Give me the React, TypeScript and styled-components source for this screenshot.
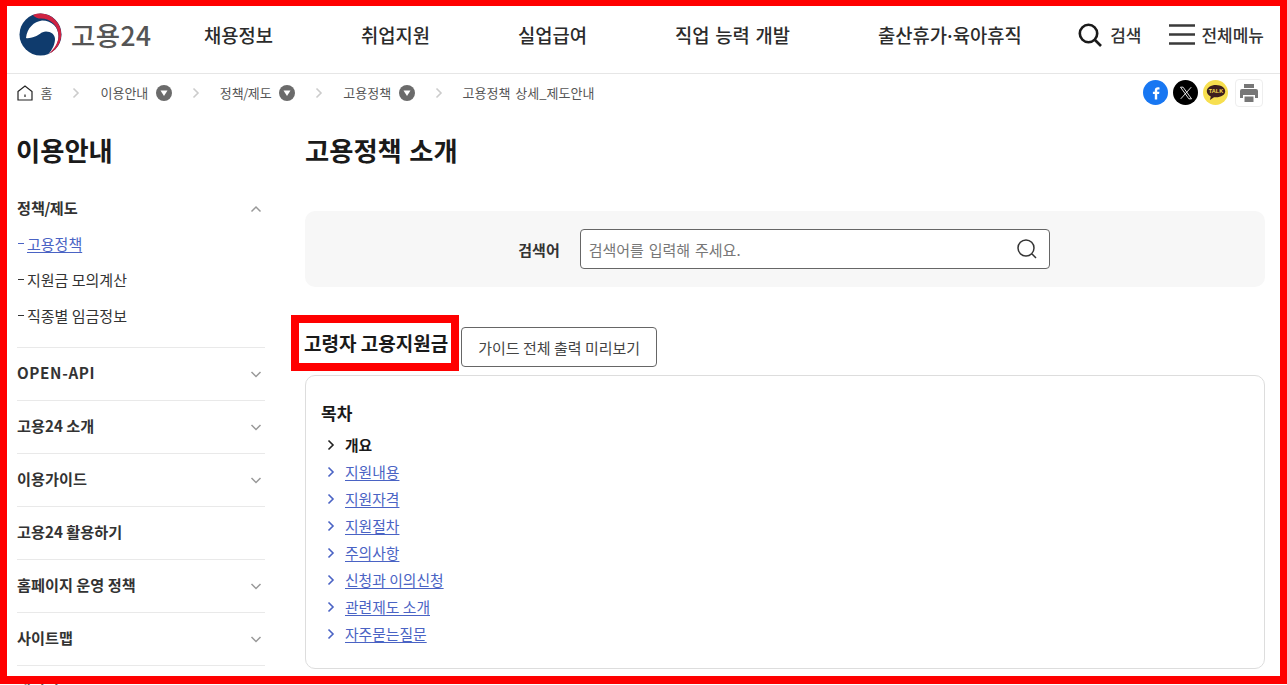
import React from "react";
import styled, { createGlobalStyle } from "styled-components";

const GlobalStyle = createGlobalStyle`
  html, body {
    margin: 0;
    padding: 0;
    height: 685px;
    overflow: hidden;
    background: #fff;
    font-family: "Noto Sans CJK KR", "Noto Sans", sans-serif;
    color: #222;
  }
  * { box-sizing: border-box; }
  a { color: inherit; text-decoration: none; }
  ul { list-style: none; margin: 0; padding: 0; }
`;

const Page = styled.div`
  width: 1287px;
  height: 685px;
  overflow: hidden;
  position: relative;
`;

const RedFrame = styled.div`
  position: absolute;
  inset: 0 0 1px 0;
  border: solid #f00;
  border-width: 6px 7px 8px 7px;
  pointer-events: none;
  z-index: 5;
`;

const Header = styled.header`
  height: 74px;
  border-bottom: 1px solid #e6e6e6;
  display: flex;
  align-items: center;
  padding: 0 23px 4px 19px;
`;

const Logo = styled.a`
  display: flex;
  align-items: center;
  gap: 9px;
  width: 185px;
  font-size: 26.4px;
  font-weight: 500;
  color: #555;
  letter-spacing: 0.5px;
`;

const Nav = styled.nav`
  display: flex;
  gap: 88px;
  flex: 1;
`;

const NavItem = styled.a`
  font-size: 18.75px;
  font-weight: 500;
  word-spacing: 1.5px;
  color: #2b2b2b;
  white-space: nowrap;
`;

const NarrowDot = styled.span`
  margin: 0 -2.5px;
`;

const HeaderTools = styled.div`
  display: flex;
  align-items: center;
  gap: 28px;
`;

const Tool = styled.a`
  display: flex;
  align-items: center;
  gap: 6px;
  font-size: 17px;
  font-weight: 500;
  color: #333;
`;

const CrumbBar = styled.div`
  height: 37px;
  display: flex;
  align-items: center;
  justify-content: space-between;
  padding: 0 24px 0 17px;
`;

const Crumbs = styled.ol`
  display: flex;
  align-items: center;
  margin: 0;
  padding: 0;
  list-style: none;
  font-size: 13px;
  word-spacing: 2px;
  color: #555;
`;

const Crumb = styled.li`
  display: flex;
  align-items: center;
  gap: 7.5px;
  white-space: nowrap;
`;

const CrumbSep = styled.span`
  display: flex;
  width: 48px;
  justify-content: center;
`;

const CrumbDot = styled.span`
  width: 16px;
  height: 16px;
  border-radius: 50%;
  background: #6b6b6b;
  display: flex;
  align-items: center;
  justify-content: center;
`;

const Share = styled.div`
  display: flex;
  align-items: center;
  gap: 5px;
`;

const ShareCircle = styled.a<{ $bg: string }>`
  width: 25px;
  height: 25px;
  border-radius: 50%;
  background: ${(p) => p.$bg};
  display: flex;
  align-items: center;
  justify-content: center;
`;

const PrintButton = styled.a`
  width: 28px;
  height: 28px;
  margin-left: 2px;
  border: 1px solid #eee;
  border-radius: 4px;
  display: flex;
  align-items: center;
  justify-content: center;
`;

const Body = styled.div`
  display: flex;
  padding: 0 22px 0 17px;
  gap: 40px;
`;

const Side = styled.aside`
  width: 248px;
  flex: none;
`;

const SideTitle = styled.h2`
  margin: 17px 0 11px -1px;
  font-size: 26.3px;
  line-height: 44px;
  font-weight: 700;
  color: #1a1a1a;
`;

const SideGroup = styled.div`
  border-bottom: 1px solid #e9e9e9;
`;

const SideHead = styled.a`
  display: flex;
  align-items: center;
  justify-content: space-between;
  height: 52px;
  padding: 0 2px 5px 0;
  font-size: 15.2px;
  font-weight: 700;
  color: #333;
  svg { margin-bottom: -5px; }
`;

const LatinLabel = styled.span`
  letter-spacing: 0.65px;
`;

const Slash = styled.span`
  margin: 0 -0.5px;
`;

const CrumbSlash = styled.span`
  margin: 0 -0.5px;
`;

const SubList = styled.ul`
  margin-top: -10px;
  padding-bottom: 14px;
`;

const SubItem = styled.li<{ $active?: boolean }>`
  height: 36px;
  display: flex;
  align-items: center;
  font-size: 15px;
  color: ${(p) => (p.$active ? "#4a63c4" : "#333")};
  a { text-decoration: ${(p) => (p.$active ? "underline" : "none")}; text-underline-offset: 2px; }
  &::before {
    content: "";
    width: 6px;
    height: 1px;
    margin: 0 3px 0 1px;
    background: currentColor;
  }
`;

const Main = styled.main`
  flex: 1;
  min-width: 0;
`;

const PageTitle = styled.h1`
  margin: 17px 0 0;
  font-size: 26.3px;
  word-spacing: 1.5px;
  line-height: 44px;
  font-weight: 700;
  color: #1a1a1a;
`;

const SearchPanel = styled.form`
  margin-top: 39px;
  height: 76px;
  padding-right: 2px;
  background: #f7f7f7;
  border-radius: 10px;
  display: flex;
  align-items: center;
  justify-content: center;
  gap: 20px;
`;

const SearchLabel = styled.label`
  font-size: 15px;
  font-weight: 700;
  color: #333;
`;

const SearchField = styled.div`
  width: 470px;
  height: 40px;
  border: 1px solid #666;
  border-radius: 4px;
  background: #fff;
  display: flex;
  align-items: center;
  justify-content: space-between;
  padding: 0 11px 0 8px;
`;

const SearchInput = styled.input`
  border: 0;
  outline: 0;
  flex: 1;
  font: inherit;
  font-size: 15px;
  word-spacing: 1.5px;
  background: transparent;
  padding: 0;
  &::placeholder { color: #777; opacity: 1; }
`;

const TitleRow = styled.div`
  margin-top: 40px;
  height: 40px;
  display: flex;
  align-items: center;
  gap: 13px;
`;

const GuideTitle = styled.h3`
  position: relative;
  margin: 0 0 8px -1px;
  font-size: 19px;
  line-height: 28px;
  font-weight: 700;
  color: #1a1a1a;
  white-space: nowrap;
  &::after {
    content: "";
    position: absolute;
    inset: -14px -11px -14px -13px;
    border: 8px solid #f00;
  }
`;

const PreviewButton = styled.button`
  height: 40px;
  width: 196px;
  border: 1px solid #666;
  border-radius: 4px;
  background: #fff;
  font: inherit;
  font-size: 15px;
  color: #444;
  padding: 0;
`;

const Toc = styled.section`
  margin-top: 8px;
  height: 294px;
  border: 1px solid #ddd;
  border-radius: 10px;
  padding: 23px 15px 0;
`;

const TocTitle = styled.h4`
  margin: 0 0 5px;
  font-size: 17px;
  line-height: 27px;
  font-weight: 700;
  color: #1a1a1a;
`;

const TocItem = styled.li<{ $current?: boolean }>`
  height: 27px;
  display: flex;
  align-items: center;
  gap: 8px;
  padding-left: 4px;
  font-size: 14.8px;
  color: ${(p) => (p.$current ? "#1a1a1a" : "#4a63c4")};
  font-weight: ${(p) => (p.$current ? 700 : 400)};
  a { text-decoration: ${(p) => (p.$current ? "none" : "underline")}; text-underline-offset: 2px; }
`;

const Chevron = ({ up, color = "#999", size = 14 }: { up?: boolean; color?: string; size?: number }) => (
  <svg width={size} height={size} viewBox="0 0 14 14" fill="none">
    <path d={up ? "M2.5 9.5 7 5l4.5 4.5" : "M2.5 5 7 9.5 11.5 5"} stroke={color} strokeWidth="1.5" />
  </svg>
);

const ChevronRight = ({ color, size = 12 }: { color: string; size?: number }) => (
  <svg width={size} height={size} viewBox="0 0 12 12" fill="none">
    <path d="M3.5 1.5 8 6l-4.5 4.5" stroke={color} strokeWidth="1.6" />
  </svg>
);

const Emblem = () => (
  <svg width="43" height="43" viewBox="0 0 43 43">
    <circle cx="21.5" cy="21.5" r="21" fill="#0f3b6d" />
    <path d="M7 25C8 15 15 8.500 23 7.500c10 0 16.500 7 16.500 15.500 0 8-4.500 15-10.500 18.500 5-5.500 7-11 7-15.500 0-4.500-4-7.500-9-7.500-5 0-7 4-11 5C12 25 9 25.500 7 25Z" fill="#fff" />
    <path d="M14 1.900A21 21 0 0 1 30 40.700c6-5.700 9.500-11.700 9.500-17.700C39.500 13 32 5.500 22 5.500c-3 0-6-1-8-3.600Z" fill="#cf2342" />
  </svg>
);

const sideGroups = ["고용24 소개", "이용가이드", "고용24 활용하기", "홈페이지 운영 정책", "사이트맵"];
const tocLinks = ["지원내용", "지원자격", "지원절차", "주의사항", "신청과 이의신청", "관련제도 소개", "자주묻는질문"];
const crumbTrail = [
  <>이용안내</>,
  <>정책<CrumbSlash>/</CrumbSlash>제도</>,
  <>고용정책</>,
];

export default function App() {
  return (
    <Page>
      <GlobalStyle />
      <Header>
        <Logo href="#">
          <Emblem />
          <span>고용24</span>
        </Logo>
        <Nav>
          <NavItem href="#">채용정보</NavItem>
          <NavItem href="#">취업지원</NavItem>
          <NavItem href="#">실업급여</NavItem>
          <NavItem href="#">직업 능력 개발</NavItem>
          <NavItem href="#">출산휴가<NarrowDot>·</NarrowDot>육아휴직</NavItem>
        </Nav>
        <HeaderTools>
          <Tool href="#">
            <svg width="26" height="24" viewBox="0 0 26 24" fill="none" stroke="#1a1a1a" strokeWidth="2.6">
              <circle cx="10.5" cy="10.5" r="8.7" />
              <path d="m17 17 6 6" />
            </svg>
            검색
          </Tool>
          <Tool href="#">
            <svg width="26" height="21" viewBox="0 0 26 21" fill="none" stroke="#3a3a3a" strokeWidth="2.5">
              <path d="M0 1.500h26M0 10.500h26M0 19.500h26" />
            </svg>
            전체메뉴
          </Tool>
        </HeaderTools>
      </Header>

      <CrumbBar>
        <Crumbs>
          <Crumb>
            <svg width="16" height="16" viewBox="0 0 16 16" fill="none" stroke="#222" strokeWidth="1.2">
              <path d="M1 6.500 8 1l7 5.500V15H1Z" />
              <path d="M8 9.500v2.500" />
            </svg>
            홈
          </Crumb>
          <CrumbSep><ChevronRight color="#ccc" /></CrumbSep>
          {crumbTrail.map((c, i) => (
            <React.Fragment key={i}>
              <Crumb>
                <span>{c}</span>
                <CrumbDot>
                  <svg width="8" height="8" viewBox="0 0 8 8"><path d="M0.5 1.500h7L4 7Z" fill="#fff" /></svg>
                </CrumbDot>
              </Crumb>
              <CrumbSep><ChevronRight color="#ccc" /></CrumbSep>
            </React.Fragment>
          ))}
          <Crumb>고용정책 상세_제도안내</Crumb>
        </Crumbs>
        <Share>
          <ShareCircle href="#" $bg="#1877f2">
            <svg width="14" height="14" viewBox="0 0 14 14"><path d="M8.2 13.500V8h1.900l.3-2.200H8.200V4.500c0-.7.3-1.100 1.100-1.100h1.200V1.500C10.200 1.400 9.600 1.300 8.900 1.300 7 1.300 5.800 2.400 5.800 4.300v1.500H3.900V8h1.900v5.500Z" fill="#fff" /></svg>
          </ShareCircle>
          <ShareCircle href="#" $bg="#000">
            <svg width="14" height="14" viewBox="0 0 24 24" fill="none" stroke="#fff" strokeWidth="1.5"><path d="M2.500 2h4.500l14.500 20H17ZM21 2 3 22" /></svg>
          </ShareCircle>
          <ShareCircle href="#" $bg="#f7df4f">
            <svg width="20" height="18" viewBox="0 0 20 18">
              <path d="M10 1C4.800 1 .8 3.700.8 7.200c0 2.200 1.600 4.100 4 5.200l-.9 3.600 4.100-2.800c.6.100 1.300.1 2 .1 5.200 0 9.200-2.700 9.200-6.100S15.200 1 10 1Z" fill="#3c1e1e" />
              <text x="10" y="9.200" textAnchor="middle" fontSize="5.500" fontWeight="900" fontFamily="Liberation Sans, sans-serif" fill="#f7df4f">TALK</text>
            </svg>
          </ShareCircle>
          <PrintButton href="#">
            <svg width="20" height="20" viewBox="0 0 20 20" fill="#777">
              <path d="M5 1h10v4H5Z" />
              <path d="M3 6h14a2 2 0 0 1 2 2v7h-3v-3H4v3H1V8a2 2 0 0 1 2-2Z" />
              <path d="M4 12h12v8H4Z" fill="#fff" />
              <path d="M5.500 13.500h9V19h-9Z" />
            </svg>
          </PrintButton>
        </Share>
      </CrumbBar>

      <Body>
        <Side>
          <SideTitle>이용안내</SideTitle>
          <SideGroup>
            <SideHead href="#"><span>정책<Slash>/</Slash>제도</span><Chevron up /></SideHead>
            <SubList>
              <SubItem $active><a href="#">고용정책</a></SubItem>
              <SubItem><a href="#">지원금 모의계산</a></SubItem>
              <SubItem><a href="#">직종별 임금정보</a></SubItem>
            </SubList>
          </SideGroup>
          <SideGroup>
            <SideHead href="#"><LatinLabel>OPEN-API</LatinLabel><Chevron /></SideHead>
          </SideGroup>
          {sideGroups.map((g) => (
            <SideGroup key={g}>
              <SideHead href="#">
                {g}
                {g !== "고용24 활용하기" && <Chevron />}
              </SideHead>
            </SideGroup>
          ))}
          <SideGroup>
            <SideHead href="#">개인정보<Chevron /></SideHead>
          </SideGroup>
        </Side>
        <Main>
          <PageTitle>고용정책 소개</PageTitle>
          <SearchPanel>
            <SearchLabel htmlFor="keyword">검색어</SearchLabel>
            <SearchField>
              <SearchInput id="keyword" placeholder="검색어를 입력해 주세요." />
              <svg width="22" height="22" viewBox="0 0 22 22" fill="none" stroke="#333" strokeWidth="1.5">
                <circle cx="10" cy="10" r="8" />
                <path d="m16 16 4 4" />
              </svg>
            </SearchField>
          </SearchPanel>
          <TitleRow>
            <GuideTitle>고령자 고용지원금</GuideTitle>
            <PreviewButton type="button">가이드 전체 출력 미리보기</PreviewButton>
          </TitleRow>
          <Toc>
            <TocTitle>목차</TocTitle>
            <ul>
              <TocItem $current><ChevronRight color="#222" /><a href="#">개요</a></TocItem>
              {tocLinks.map((t) => (
                <TocItem key={t}><ChevronRight color="#4a63c4" /><a href="#">{t}</a></TocItem>
              ))}
            </ul>
          </Toc>
        </Main>
      </Body>
      <RedFrame />
    </Page>
  );
}
